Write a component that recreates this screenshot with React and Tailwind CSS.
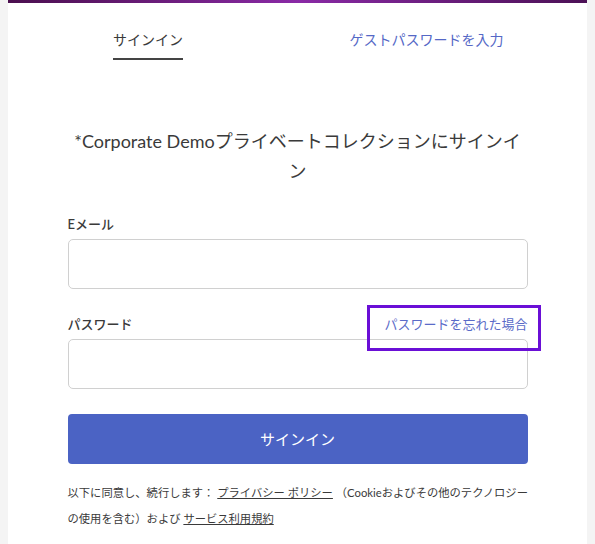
export default function App() {
  const font = { fontFamily: '"Lato", "Noto Sans CJK JP", sans-serif' }

  return (
    <div className="flex h-[544px] w-[595px] overflow-hidden bg-[#f4f4f4] pl-2 pr-2" style={font}>
      <div className="flex flex-1 flex-col bg-white">
        {/* Top banner */}
        <div className="h-[3px] bg-gradient-to-r from-[#4b0f4f] via-[#8a2aa6] to-[#4c1156]" />

        {/* Tabs */}
        <div className="flex pt-[26px]">
          <div className="flex w-[290px] justify-center">
            <div className="ml-[-10px] flex flex-col items-stretch">
              <span className="text-[14px] leading-[22px] text-[#3a3a3a]">サインイン</span>
              <div className="mt-[7px] h-[2px] bg-[#444]" />
            </div>
          </div>
          <div className="flex flex-1 justify-center">
            <span className="ml-[-32px] text-[14px] leading-[22px] text-[#5568c6]">ゲストパスワードを入力</span>
          </div>
        </div>

        {/* Form */}
        <div className="mx-auto mt-[66px] flex w-[460px] flex-col">
          <h1 className="text-center text-[18px] leading-[30px] text-[#3a3a3a]">
            *Corporate Demoプライベートコレクションにサインイン
          </h1>

          <label className="mt-[28px] block text-[13px] font-medium leading-[20px] text-[#3a3a3a]">Eメール</label>
          <div className="mt-[5px] h-[50px] rounded-[5px] border border-[#d0d0d0]" />

          <div className="mt-[25px] flex h-[20px] items-center justify-between">
            <label className="block text-[13px] font-medium leading-[20px] text-[#3a3a3a]">パスワード</label>
            <div className="relative block h-[20px] text-[13px] leading-[20px] text-[#5a6bc8]">
              パスワードを忘れた場合
              <div className="absolute left-[-17px] right-[-13px] top-[-9px] bottom-[-17px] border-[3px] border-[#6a0fd6]" />
            </div>
          </div>
          <div className="mt-[5px] h-[50px] rounded-[5px] border border-[#d0d0d0]" />

          <button className="mt-[25px] flex h-[50px] items-center justify-center rounded-[4px] bg-[#4b63c4] text-[15px] text-white">
            サインイン
          </button>

          <div className="mt-[16px] text-[11.3px] leading-[26px] text-[#3a3a3a]">
            <p className="whitespace-nowrap">
              以下に同意し、続行します： <span className="underline">プライバシー ポリシー</span> （Cookieおよびその他のテクノロジー
            </p>
            <p className="whitespace-nowrap">
              の使用を含む）および <span className="underline">サービス利用規約</span>
            </p>
          </div>
        </div>
      </div>
    </div>
  )
}
